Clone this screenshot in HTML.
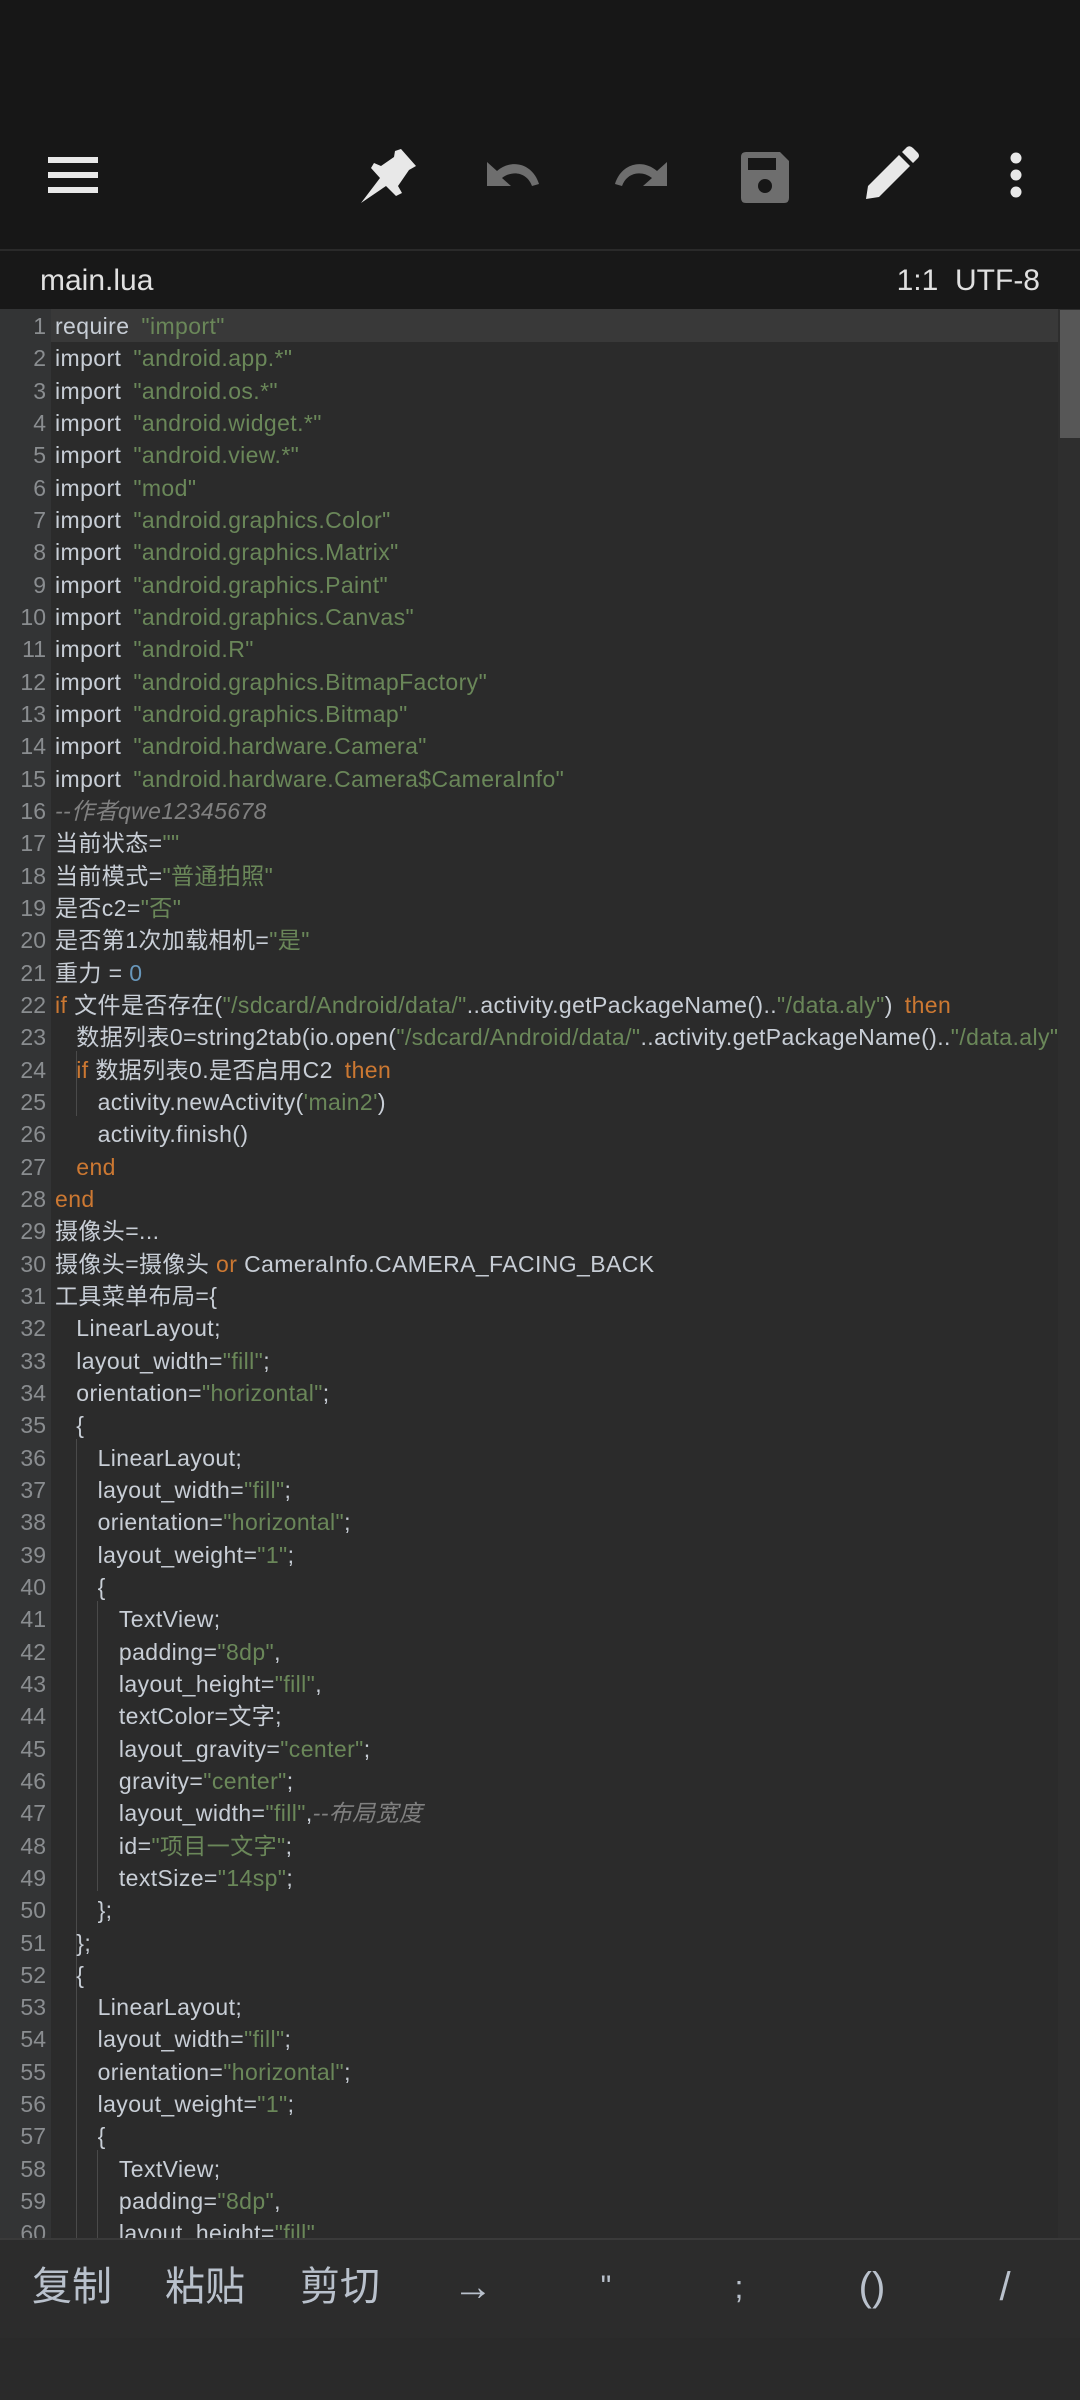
<!DOCTYPE html>
<html><head><meta charset="utf-8"><style>
*{margin:0;padding:0;box-sizing:border-box}
body{width:1080px;height:2400px;background:#2b2b2b;overflow:hidden;position:relative;font-family:"Liberation Sans","Noto Sans CJK SC",sans-serif}
#top{position:absolute;left:0;top:0;width:1080px;height:249px;background:#171717}
#sep{position:absolute;left:0;top:249px;width:1080px;height:2px;background:#2a2a2a}
#fbar{position:absolute;left:0;top:251px;width:1080px;height:58px;background:#181818;color:#e0e0e0;font-size:30px}
#gutter{position:absolute;left:0;top:309px;width:51px;height:1929px;background:#333435}
#code{position:absolute;left:0;top:309px;width:1058px;height:1929px;overflow:hidden}
#hl{position:absolute;left:51px;top:309px;width:1007px;height:33px;background:#393939}
.l{position:absolute;left:0;height:32.33px;line-height:32.33px;font-size:23px;color:#c8ced6;white-space:nowrap}
.n{position:absolute;left:0;width:46px;text-align:right;color:#8a8d90}
.t{position:absolute;left:55px;letter-spacing:0.4px}
.sp{display:inline-block;width:12px}
.s{color:#6a8759}.k{color:#cc7832}.d{color:#6897bb}.c{color:#808080;font-style:italic}
.g{position:absolute;width:1px;background:#4a4a4a}
#sb{position:absolute;left:1058px;top:309px;width:22px;height:1929px;background:#2e2e2e}
#thumb{position:absolute;left:1060px;top:310px;width:20px;height:128px;background:#575757}
#bb{position:absolute;left:0;top:2238px;width:1080px;height:100px;background:#2c2c2c;border-top:2px solid #3a3a3a}
#bb2{position:absolute;left:0;top:2338px;width:1080px;height:62px;background:#2a2a2a}
.b{position:absolute;top:2262px;font-size:40px;color:#b9c1cc;transform:translateX(-50%);line-height:50px}
</style></head><body>
<div id="top"></div><div id="sep"></div>
<svg style="position:absolute;left:0;top:130px" width="1080" height="100" viewBox="0 130 1080 100">
<g fill="#e8e8e8">
<rect x="48" y="157" width="50" height="6"/><rect x="48" y="172" width="50" height="6"/><rect x="48" y="187" width="50" height="6"/>
</g>
<path d="M401 149 L416 166 L409 170 L398 186 L402 193 L396 196 L386 186 L361 203 L380 178 L371 168 L374 163 L381 166 L394 157 L395 151 Z" fill="#e8e8e8"/>
<path d="M487 162 L487 186 L511 186 L502 178 C512 170 527 172 532 186 L539 184 C533 164 512 158 497 171 Z" fill="#6e6e6e"/>
<path d="M667 162 L667 186 L643 186 L652 178 C642 170 627 172 622 186 L615 184 C621 164 642 158 657 171 Z" fill="#6e6e6e"/>
<path d="M742 152 L780 152 L789 161 L789 198 Q789 203 784 203 L746 203 Q741 203 741 198 L741 157 Q741 152 746 152 Z" fill="#6e6e6e"/>
<rect x="748" y="158" width="28" height="12" fill="#171717"/>
<circle cx="765" cy="186" r="7" fill="#171717"/>
<path d="M866 199 L868 186 L899 155 L910 166 L879 197 Z M902 152 L907 147 Q910 145 913 148 L918 153 Q920 156 918 158 L913 163 Z" fill="#e8e8e8"/>
<g fill="#e8e8e8"><circle cx="1016" cy="158" r="5.5"/><circle cx="1016" cy="175" r="5.5"/><circle cx="1016" cy="192" r="5.5"/></g>
</svg>
<div id="fbar"><span style="position:absolute;left:40px;top:13px">main.lua</span><span style="position:absolute;right:40px;top:13px">1:1&nbsp;&nbsp;UTF-8</span></div>
<div id="gutter"></div><div id="sb"></div><div id="thumb"></div><div id="hl"></div>
<div class="g" style="left:76px;top:1051px;height:65px"></div>
<div class="g" style="left:76px;top:1439px;height:800px"></div>
<div class="g" style="left:97px;top:1601px;height:290px"></div>
<div class="g" style="left:97px;top:2150px;height:90px"></div>
<div id="code"></div>
<div id="bb"></div><div id="bb2"></div>
<div class="b" style="left:72px">复制</div><div class="b" style="left:205px">粘贴</div><div class="b" style="left:340px">剪切</div>
<div class="b" style="left:473px">→</div><div class="b" style="left:606px;font-size:30px">"</div><div class="b" style="left:739px;font-size:32px">;</div>
<div class="b" style="left:872px">()</div><div class="b" style="left:1005px">/</div>
<script>
var L=[
[0,'require_<s>"import"</s>'],
[0,'import_<s>"android.app.*"</s>'],
[0,'import_<s>"android.os.*"</s>'],
[0,'import_<s>"android.widget.*"</s>'],
[0,'import_<s>"android.view.*"</s>'],
[0,'import_<s>"mod"</s>'],
[0,'import_<s>"android.graphics.Color"</s>'],
[0,'import_<s>"android.graphics.Matrix"</s>'],
[0,'import_<s>"android.graphics.Paint"</s>'],
[0,'import_<s>"android.graphics.Canvas"</s>'],
[0,'import_<s>"android.R"</s>'],
[0,'import_<s>"android.graphics.BitmapFactory"</s>'],
[0,'import_<s>"android.graphics.Bitmap"</s>'],
[0,'import_<s>"android.hardware.Camera"</s>'],
[0,'import_<s>"android.hardware.Camera$CameraInfo"</s>'],
[0,'<c>--作者qwe12345678</c>'],
[0,'当前状态=<s>""</s>'],
[0,'当前模式=<s>"普通拍照"</s>'],
[0,'是否c2=<s>"否"</s>'],
[0,'是否第1次加载相机=<s>"是"</s>'],
[0,'重力 = <d>0</d>'],
[0,'<k>if</k> 文件是否存在(<s>"/sdcard/Android/data/"</s>..activity.getPackageName()..<s>"/data.aly"</s>)_<k>then</k>'],
[1,'数据列表0=string2tab(io.open(<s>"/sdcard/Android/data/"</s>..activity.getPackageName()..<s>"/data.aly"</s>):read(<s>"*a"</s>))'],
[1,'<k>if</k> 数据列表0.是否启用C2_<k>then</k>'],
[2,'activity.newActivity(<s>\'main2\'</s>)'],
[2,'activity.finish()'],
[1,'<k>end</k>'],
[0,'<k>end</k>'],
[0,'摄像头=...'],
[0,'摄像头=摄像头 <k>or</k> CameraInfo.CAMERA_FACING_BACK'],
[0,'工具菜单布局={'],
[1,'LinearLayout;'],
[1,'layout_width=<s>"fill"</s>;'],
[1,'orientation=<s>"horizontal"</s>;'],
[1,'{'],
[2,'LinearLayout;'],
[2,'layout_width=<s>"fill"</s>;'],
[2,'orientation=<s>"horizontal"</s>;'],
[2,'layout_weight=<s>"1"</s>;'],
[2,'{'],
[3,'TextView;'],
[3,'padding=<s>"8dp"</s>,'],
[3,'layout_height=<s>"fill"</s>,'],
[3,'textColor=文字;'],
[3,'layout_gravity=<s>"center"</s>;'],
[3,'gravity=<s>"center"</s>;'],
[3,'layout_width=<s>"fill"</s>,<c>--布局宽度</c>'],
[3,'id=<s>"项目一文字"</s>;'],
[3,'textSize=<s>"14sp"</s>;'],
[2,'};'],
[1,'};'],
[1,'{'],
[2,'LinearLayout;'],
[2,'layout_width=<s>"fill"</s>;'],
[2,'orientation=<s>"horizontal"</s>;'],
[2,'layout_weight=<s>"1"</s>;'],
[2,'{'],
[3,'TextView;'],
[3,'padding=<s>"8dp"</s>,'],
[3,'layout_height=<s>"fill"</s>,'],
[3,'textColor=文字;']];
var h='';
for(var i=0;i<L.length;i++){
var t=L[i][1].replace(/_</g,'<span class="sp"></span><').replace(/<(s|k|d|c)>/g,'<span class="$1">').replace(/<\/(s|k|d|c)>/g,'</span>');
h+='<div class="l" style="top:'+(1+i*32.33)+'px;width:1058px"><span class="n">'+(i+1)+'</span><span class="t" style="left:'+(55+L[i][0]*21.3)+'px">'+t+'</span></div>';
}
document.getElementById('code').innerHTML=h;
</script>
</body></html>
